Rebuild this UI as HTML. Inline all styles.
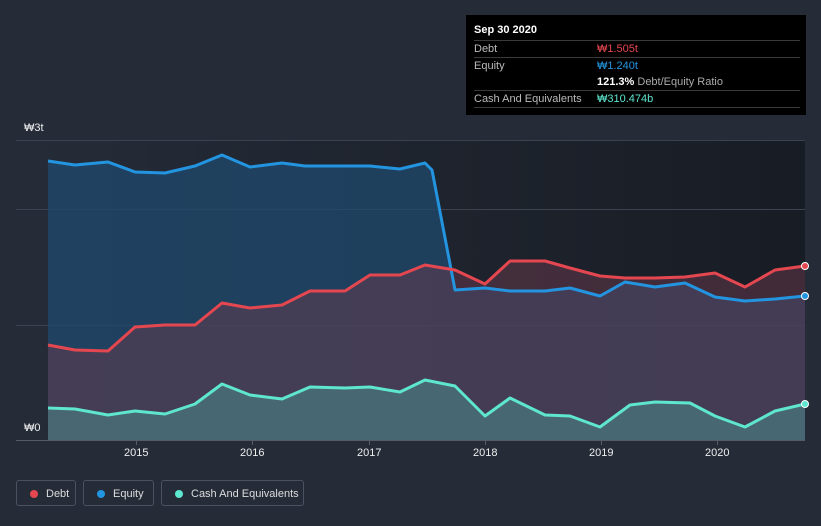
<!DOCTYPE html>
<html><head><meta charset="utf-8"><style>
body{margin:0;width:821px;height:526px;background:#252c38;font-family:"Liberation Sans","Noto Sans CJK KR",sans-serif;overflow:hidden;position:relative}
.tt{position:absolute;left:466px;top:15px;width:340px;height:100px;background:#000;color:#fff;font-size:11px}
.tt .r{position:absolute;left:8px;right:6px;border-top:1px solid #3a3a3a;height:17px;line-height:17px;color:#bbb}
.tt .r span{position:absolute;left:123px}
.lg{position:absolute;top:480px;height:26px;border:1px solid #4a5160;border-radius:3px;color:#ddd;font-size:11px;line-height:26px;box-sizing:border-box}
.lg i{position:absolute;left:13px;top:9px;width:8px;height:8px;border-radius:50%}
.lg b{font-weight:normal;position:absolute;left:29px}
.ax{position:absolute;color:#eee;font-size:11px}
</style></head><body>
<svg width="821" height="526" style="position:absolute;left:0;top:0">
<defs><linearGradient id="bg" x1="0" x2="1"><stop offset="0" stop-color="#252c38"/><stop offset="1" stop-color="#181c24"/></linearGradient></defs>
<rect x="16" y="140" width="789" height="300" fill="url(#bg)"/>
<g stroke="#3c4350" stroke-width="1"><line x1="16" x2="805" y1="140.5" y2="140.5"/><line x1="16" x2="805" y1="209.5" y2="209.5"/><line x1="16" x2="805" y1="325.5" y2="325.5"/></g>
<path d="M48,161 L75,165 L108,162 L135,172 L165,173 L195,166 L222,155 L250,167 L282,163 L305,166 L370,166 L400,169 L425,163 L432,170 L455,290 L485,288 L510,291 L545,291 L570,288 L600,296 L625,282 L655,287 L685,283 L715,297 L745,301 L775,299 L805,296 L805,440 L48,440Z" fill="#1f4a6e" fill-opacity="0.75"/>
<path d="M48,345 L75,350 L108,351 L135,327 L165,325 L195,325 L222,303 L250,308 L282,305 L310,291 L345,291 L370,275 L400,275 L425,265 L455,270 L485,284 L510,261 L545,261 L570,268 L600,276 L625,278 L655,278 L685,277 L715,273 L745,287 L775,270 L805,266 L805,440 L48,440Z" fill="#6a3a4e" fill-opacity="0.5"/>
<path d="M48,408 L75,409 L108,415 L135,411 L165,414 L195,404 L222,384 L250,395 L282,399 L310,387 L345,388 L370,387 L400,392 L425,380 L455,386 L485,416 L510,398 L545,415 L570,416 L600,427 L630,405 L655,402 L690,403 L715,416 L745,427 L775,411 L805,404 L805,440 L48,440Z" fill="#4a8a8a" fill-opacity="0.55"/>
<g fill="none" stroke-width="3" stroke-linejoin="round">
<path stroke="#2394df" d="M48,161 L75,165 L108,162 L135,172 L165,173 L195,166 L222,155 L250,167 L282,163 L305,166 L370,166 L400,169 L425,163 L432,170 L455,290 L485,288 L510,291 L545,291 L570,288 L600,296 L625,282 L655,287 L685,283 L715,297 L745,301 L775,299 L805,296"/>
<path stroke="#e4474f" d="M48,345 L75,350 L108,351 L135,327 L165,325 L195,325 L222,303 L250,308 L282,305 L310,291 L345,291 L370,275 L400,275 L425,265 L455,270 L485,284 L510,261 L545,261 L570,268 L600,276 L625,278 L655,278 L685,277 L715,273 L745,287 L775,270 L805,266"/>
<path stroke="#5ee6d0" d="M48,408 L75,409 L108,415 L135,411 L165,414 L195,404 L222,384 L250,395 L282,399 L310,387 L345,388 L370,387 L400,392 L425,380 L455,386 L485,416 L510,398 L545,415 L570,416 L600,427 L630,405 L655,402 L690,403 L715,416 L745,427 L775,411 L805,404"/>
</g>
<circle cx="805" cy="266" r="3.5" fill="#e4474f" stroke="#fff" stroke-width="1"/>
<circle cx="805" cy="296" r="3.5" fill="#2394df" stroke="#fff" stroke-width="1"/>
<circle cx="805" cy="404" r="3.5" fill="#5ee6d0" stroke="#fff" stroke-width="1"/>
<line x1="16" x2="805" y1="440.5" y2="440.5" stroke="#555c68"/>
<g stroke="#555c68"><line x1="136.5" x2="136.5" y1="440" y2="445"/><line x1="252.5" x2="252.5" y1="440" y2="445"/><line x1="369.5" x2="369.5" y1="440" y2="445"/><line x1="485.5" x2="485.5" y1="440" y2="445"/><line x1="601.5" x2="601.5" y1="440" y2="445"/><line x1="717.5" x2="717.5" y1="440" y2="445"/></g>
</svg>
<div class="ax" style="left:24px;top:122px">₩3t</div>
<div class="ax" style="left:24px;top:422px">₩0</div>
<div class="ax" style="left:124px;top:447px">2015</div>
<div class="ax" style="left:240px;top:447px">2016</div>
<div class="ax" style="left:357px;top:447px">2017</div>
<div class="ax" style="left:473px;top:447px">2018</div>
<div class="ax" style="left:589px;top:447px">2019</div>
<div class="ax" style="left:705px;top:447px">2020</div>
<div class="tt">
<div style="position:absolute;left:8px;top:9px;font-weight:bold">Sep 30 2020</div>
<div class="r" style="top:25px">Debt<span style="color:#e4474f">₩1.505t</span></div>
<div class="r" style="top:42px">Equity<span style="color:#2394df">₩1.240t</span></div>
<div class="r" style="top:59px;border-top:none"><span style="color:#fff"><b>121.3%</b> <i style="color:#aaa;font-style:normal">Debt/Equity Ratio</i></span></div>
<div class="r" style="top:75px">Cash And Equivalents<span style="color:#5ee6d0">₩310.474b</span></div>
<div class="r" style="top:92px;height:0"></div>
</div>
<div class="lg" style="left:16px;width:60px"><i style="background:#e4474f"></i><b>Debt</b></div>
<div class="lg" style="left:83px;width:71px"><i style="background:#2394df"></i><b>Equity</b></div>
<div class="lg" style="left:161px;width:143px"><i style="background:#5ee6d0"></i><b>Cash And Equivalents</b></div>
</body></html>
